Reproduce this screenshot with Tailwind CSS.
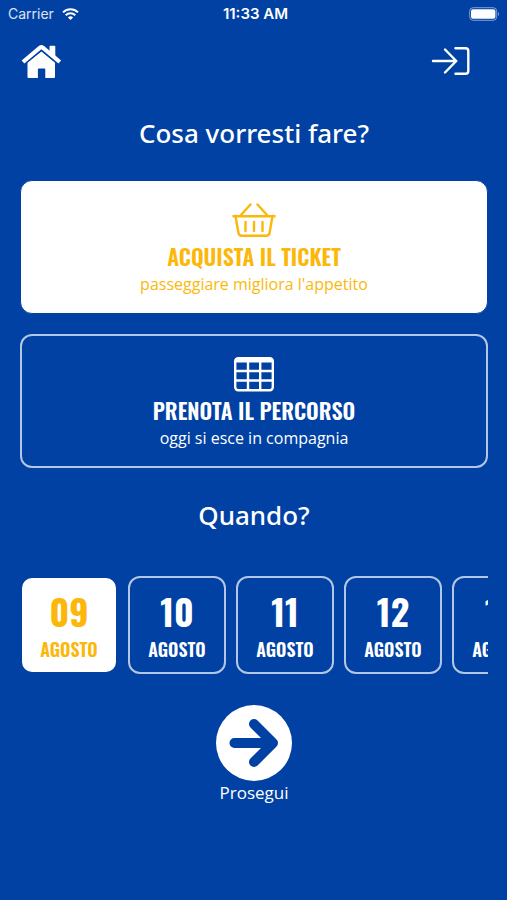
<!DOCTYPE html>
<html lang="it">
<head>
<meta charset="utf-8">
<meta name="viewport" content="width=device-width, initial-scale=1">
<title>Cosa vorresti fare?</title>
<script src="https://cdn.jsdelivr.net/npm/@tailwindcss/browser@4"></script>
</head>
<body class="min-h-screen bg-[#0041a3] font-['Open_Sans','Noto_Sans',sans-serif] text-white">
  <div class="grid h-7 grid-cols-3 items-center px-2 font-['Inter',sans-serif] text-sm">
    <div class="flex items-center gap-2 text-white/85">
      <span>Carrier</span>
      <svg class="h-3 w-[17px]" viewBox="0 0 17 12" fill="none" stroke="white" stroke-width="2" aria-hidden="true">
        <path d="M1 4.400C5.200.2 11.800.2 16 4.400M3.700 7.200c2.700-2.600 6.900-2.600 9.600 0"/>
        <path d="M8.500 12 5.900 9.400c1.500-1.400 3.700-1.400 5.200 0z" fill="white" stroke="none"/>
      </svg>
    </div>
    <span class="pl-1 text-center text-[15px] font-semibold">11:33 AM</span>
    <svg class="h-[14px] w-8 justify-self-end" viewBox="0 0 32 14" aria-hidden="true">
      <rect x="2.700" y=".7" width="27" height="12.600" rx="3.500" fill="none" stroke="white" stroke-opacity=".5"/>
      <rect x="4" y="2.300" width="24.400" height="9.400" rx="2" fill="white"/>
      <path d="M31 5v4c1.300-.6 1.300-3.400 0-4z" fill="white" fill-opacity=".5"/>
    </svg>
  </div>

  <header class="flex items-center justify-between pt-[10px] pr-9 pl-5">
    <button type="button" aria-label="Home">
      <svg class="h-11 w-11" viewBox="0 -1 44 44" fill="white" aria-hidden="true">
        <path d="M7.500 23.500 21.400 12.500 35 23.500V38a1 1 0 0 1-1 1h-8.700v-8.500q0-1-1-1h-5.400q-1 0-1 1V39H8.500a1 1 0 0 1-1-1z"/>
        <path d="M2.600 24 20 9.300q1.400-1 2.800 0L40.200 24" fill="none" stroke="#0041a3" stroke-width="6"/>
        <path d="M29.500 7.700q0-1 1-1h3.800q1 0 1 1v12l-5.800-5z"/>
        <path d="M3 23 20 8.700q1.400-1 2.800 0L39.800 23" fill="none" stroke="white" stroke-width="4.200"/>
      </svg>
    </button>
    <button type="button" aria-label="Accedi">
      <svg class="h-10 w-10" viewBox="0 0 40 40" fill="none" stroke="white" stroke-width="2.400" stroke-linecap="round" stroke-linejoin="round" aria-hidden="true">
        <path d="M2 21h23M14 9.500 25.300 21 14 32.500M24.500 8.200h10q2.800 0 2.800 2.800v20q0 2.800-2.800 2.800h-10"/>
      </svg>
    </button>
  </header>

  <main class="pr-[19px] pl-5">
    <h1 class="mt-[33px] text-center text-[26px] leading-9 font-medium font-['Noto_Sans',sans-serif]">Cosa vorresti fare?</h1>

    <div class="mt-[29px] flex flex-col gap-5">
      <button type="button" aria-pressed="true" class="flex flex-col items-center rounded-xl border border-[#0041a3] bg-white py-[17px] text-[#fbb80b]">
        <svg class="h-10 w-12" viewBox="0 0 48 40" fill="none" stroke="currentColor" stroke-width="2.400" stroke-linecap="round" stroke-linejoin="round" aria-hidden="true">
          <path d="M2.500 18.300h43" stroke-linecap="butt"/>
          <path d="M5.500 18 8.400 34.800q.5 3 3.400 3h24.400q2.900 0 3.400-3L42.500 18M11 17 20.500 6.500M37 17 27.500 6.500M15.500 24v9M24 24v9M32.500 24v9"/>
        </svg>
        <span class="mt-[2px] text-[22px] leading-8 font-semibold font-['Oswald',sans-serif]">ACQUISTA IL TICKET</span>
        <span class="text-base leading-6">passeggiare migliora l'appetito</span>
      </button>
      <button type="button" aria-pressed="false" class="flex flex-col items-center rounded-xl border-2 border-white/70 py-4">
        <svg class="h-10 w-12" viewBox="0 0 48 40" fill="none" stroke="white" stroke-width="2.400" aria-hidden="true">
          <rect x="5.200" y="6.200" width="37.600" height="32" rx="3"/>
          <path d="M5 8.500h38" stroke-width="4"/>
          <path d="M5 19h38M5 28.500h38M18 8v30M30.200 8v30"/>
        </svg>
        <span class="mt-[2px] text-[22px] leading-8 font-semibold font-['Oswald',sans-serif]">PRENOTA IL PERCORSO</span>
        <span class="text-base leading-6">oggi si esce in compagnia</span>
      </button>
    </div>

    <h2 class="mt-[29px] text-center text-[26px] leading-9 font-medium font-['Noto_Sans',sans-serif]">Quando?</h2>

    <div class="mt-[43px] flex gap-[10px] overflow-hidden font-['Oswald',sans-serif]">
      <button type="button" aria-pressed="true" class="flex h-[98px] w-[98px] shrink-0 flex-col items-center justify-center gap-[6px] rounded-xl border-2 border-[#0041a3] bg-white pt-[6px] text-[#fbb80b]">
        <span class="text-4xl leading-9 font-bold">09</span><span class="text-lg leading-7 font-semibold">AGOSTO</span>
      </button>
      <button type="button" aria-pressed="false" class="flex h-[98px] w-[98px] shrink-0 flex-col items-center justify-center gap-[6px] rounded-xl border-2 border-white/70 pt-[6px]">
        <span class="text-4xl leading-9 font-bold">10</span><span class="text-lg leading-7 font-semibold">AGOSTO</span>
      </button>
      <button type="button" aria-pressed="false" class="flex h-[98px] w-[98px] shrink-0 flex-col items-center justify-center gap-[6px] rounded-xl border-2 border-white/70 pt-[6px]">
        <span class="text-4xl leading-9 font-bold">11</span><span class="text-lg leading-7 font-semibold">AGOSTO</span>
      </button>
      <button type="button" aria-pressed="false" class="flex h-[98px] w-[98px] shrink-0 flex-col items-center justify-center gap-[6px] rounded-xl border-2 border-white/70 pt-[6px]">
        <span class="text-4xl leading-9 font-bold">12</span><span class="text-lg leading-7 font-semibold">AGOSTO</span>
      </button>
      <button type="button" aria-pressed="false" class="flex h-[98px] w-[98px] shrink-0 flex-col items-center justify-center gap-[6px] rounded-xl border-2 border-white/70 pt-[6px]">
        <span class="text-4xl leading-9 font-bold">13</span><span class="text-lg leading-7 font-semibold">AGOSTO</span>
      </button>
    </div>

    <button type="button" class="mx-auto mt-[31px] flex flex-col items-center">
      <svg class="h-[76px] w-[76px]" viewBox="0 0 76 76" aria-hidden="true">
        <circle cx="38" cy="38" r="38" fill="white"/>
        <path d="M18.500 38H55M38 19 57 38 38 57" fill="none" stroke="#0041a3" stroke-width="10" stroke-linecap="round" stroke-linejoin="round"/>
      </svg>
      <span class="text-[17px] leading-6">Prosegui</span>
    </button>
  </main>
</body>
</html>
